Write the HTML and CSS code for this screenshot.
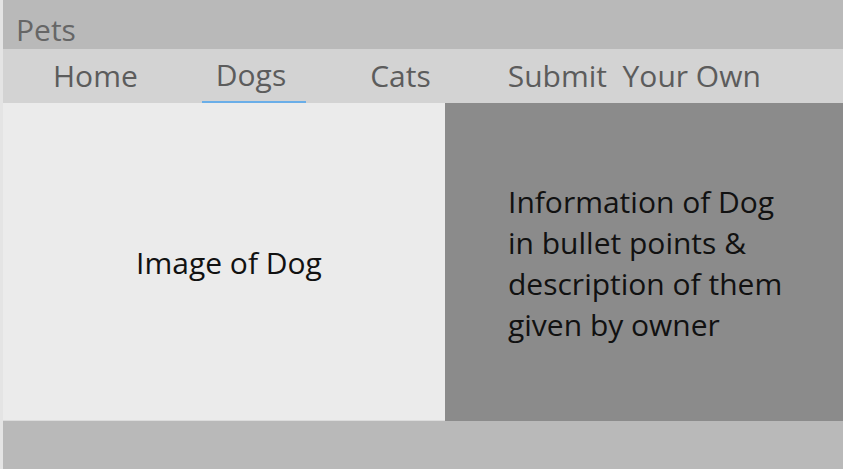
FILE: index.html
```html
<!DOCTYPE html>
<html>
<head>
<meta charset="utf-8">
<link rel="stylesheet" href="styles.css">
</head>
<body>
<div class="page">
  <header class="topbar"><span class="brand">Pets</span></header>
  <nav class="nav">
    <a class="tab">Home</a>
    <a class="tab active">Dogs</a>
    <a class="tab tab-cats">Cats</a>
    <a class="tab">Submit&nbsp; Your Own</a>
  </nav>
  <main class="content">
    <section class="image-panel">Image of Dog</section>
    <section class="info-panel"><p class="info">Information of Dog<br>in bullet points &amp;<br>description of them<br>given by owner</p></section>
  </main>
  <footer class="footer"></footer>
</div>
</body>
</html>
```
FILE: styles.css
```css
html, body {
  margin: 0;
  padding: 0;
  height: 100%;
}
body {
  background: #e4e4e4;
  font-family: "Open Sans", "Liberation Sans", sans-serif;
  padding-left: 3px;
  box-sizing: border-box;
}
.page {
  display: flex;
  flex-direction: column;
  height: 469px;
}
.topbar {
  height: 49px;
  background: #b9b9b9;
  display: flex;
  align-items: flex-end;
  padding-left: 13px;
  box-sizing: border-box;
}
.brand {
  font-size: 30px;
  color: #666;
  line-height: 40px;
  margin-bottom: -1px;
}
.nav {
  height: 54px;
  background: #d3d3d3;
  display: flex;
  padding-left: 34px;
  gap: 48px;
  box-sizing: border-box;
}
.tab {
  font-size: 30px;
  color: #5c5c5c;
  padding: 0 16px;
  line-height: 54px;
  height: 54px;
  box-sizing: border-box;
  white-space: nowrap;
}
.tab.active {
  border-bottom: 2px solid #6aaee8;
  padding: 0 20px 0 14px;
  line-height: 52px;
}
.tab-cats {
  padding-right: 13px;
}
.content {
  display: flex;
  height: 318px;
}
.image-panel {
  width: 442px;
  background: #ebebeb;
  border-bottom: 1px solid #dcdcdc;
  display: flex;
  align-items: center;
  justify-content: center;
  font-size: 30px;
  color: #111;
  padding-left: 10px;
  padding-top: 2px;
  box-sizing: border-box;
}
.info-panel {
  flex: 1;
  background: #8b8b8b;
  display: flex;
  align-items: center;
  padding-left: 63px;
  padding-top: 2px;
  box-sizing: border-box;
}
.info {
  margin: 0;
  font-size: 30px;
  line-height: 41px;
  color: #111;
}
.footer {
  flex: 1;
  background: #b9b9b9;
}
```
